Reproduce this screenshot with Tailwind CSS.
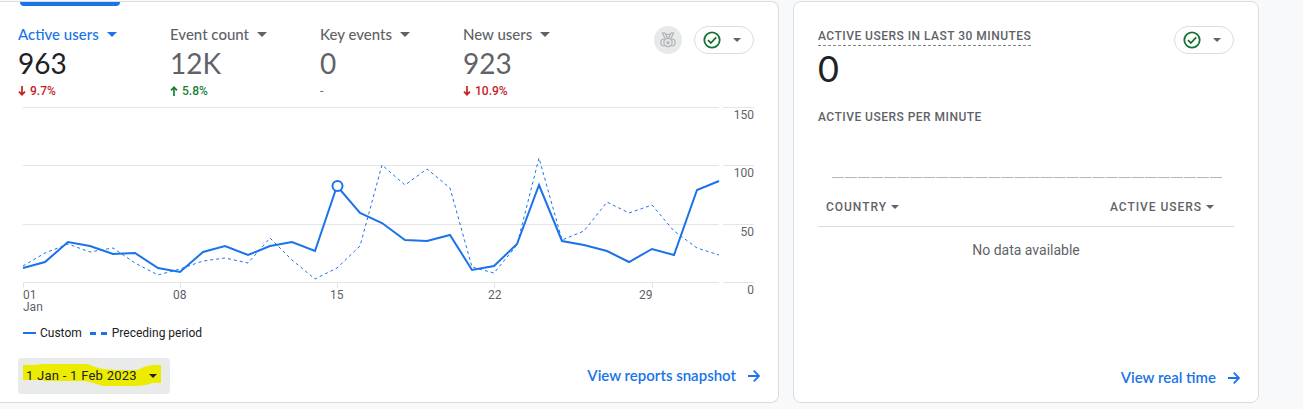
<!DOCTYPE html>
<html lang="en">
<head>
    <meta charset="UTF-8">
    <meta name="viewport" content="width=device-width, initial-scale=1.0">
    <title>Analytics Home</title>
    <script src="https://cdn.jsdelivr.net/npm/@tailwindcss/browser@4"></script>
</head>
<body class="bg-[#f8f9fb] font-[Roboto,sans-serif] text-xs text-[#5f6368]">

<main class="grid min-h-screen grid-cols-[779fr_466fr] gap-3.5 pt-px pr-11 pb-1.5">

    <!-- Overview card -->
    <section class="flex flex-col rounded-r-lg border border-l-0 border-[#dadce0] bg-white px-[18px] pb-2">
        <div class="ml-0.5 h-1 w-[100px] rounded-b bg-[#1a73e8]"></div>

        <div class="flex items-start justify-between pt-5 pr-1.5">
            <div class="grid grid-cols-[152px_150px_143px_auto] font-[Lato,sans-serif]">
                <div>
                    <button type="button" class="flex items-center gap-2 text-[15px] leading-4 font-medium text-[#1a73e8]">
                        Active users
                        <svg class="h-[5px] w-2.5" viewBox="0 0 10 5" fill="currentColor"><path d="M0 0h10L5 5z"/></svg>
                    </button>
                    <p class="mt-[5px] text-[28px] leading-8 text-[#202124]">963</p>
                    <p class="mt-1 flex items-center gap-1 font-[Roboto,sans-serif] leading-4 font-medium text-[#c5221f]">
                        <svg class="h-2.5 w-2" viewBox="0 0 8 10" fill="none" stroke="currentColor" stroke-width="1.7"><path d="M4 0v9M1 5.7l3 3 3-3"/></svg>
                        9.7%
                    </p>
                </div>
                <div>
                    <button type="button" class="flex items-center gap-2 text-[15px] leading-4 font-medium">
                        Event count
                        <svg class="h-[5px] w-2.5" viewBox="0 0 10 5" fill="currentColor"><path d="M0 0h10L5 5z"/></svg>
                    </button>
                    <p class="mt-[5px] text-[28px] leading-8">12K</p>
                    <p class="mt-1 flex items-center gap-1 font-[Roboto,sans-serif] leading-4 font-medium text-[#188038]">
                        <svg class="h-2.5 w-2" viewBox="0 0 8 10" fill="none" stroke="currentColor" stroke-width="1.7"><path d="M4 10V1M1 4.3l3-3 3 3"/></svg>
                        5.8%
                    </p>
                </div>
                <div>
                    <button type="button" class="flex items-center gap-2 text-[15px] leading-4 font-medium">
                        Key events
                        <svg class="h-[5px] w-2.5" viewBox="0 0 10 5" fill="currentColor"><path d="M0 0h10L5 5z"/></svg>
                    </button>
                    <p class="mt-[5px] text-[28px] leading-8">0</p>
                    <p class="mt-1 font-[Roboto,sans-serif] leading-4">-</p>
                </div>
                <div>
                    <button type="button" class="flex items-center gap-2 text-[15px] leading-4 font-medium">
                        New users
                        <svg class="h-[5px] w-2.5" viewBox="0 0 10 5" fill="currentColor"><path d="M0 0h10L5 5z"/></svg>
                    </button>
                    <p class="mt-[5px] text-[28px] leading-8">923</p>
                    <p class="mt-1 flex items-center gap-1 font-[Roboto,sans-serif] leading-4 font-medium text-[#c5221f]">
                        <svg class="h-2.5 w-2" viewBox="0 0 8 10" fill="none" stroke="currentColor" stroke-width="1.7"><path d="M4 0v9M1 5.7l3 3 3-3"/></svg>
                        10.9%
                    </p>
                </div>
            </div>

            <div class="flex items-center gap-3">
                <button type="button" aria-label="Benchmarking" class="flex size-7 items-center justify-center rounded-full bg-[#e8eaea] text-[#b0b3b6]">
                    <svg class="size-4" viewBox="0 0 16 16" fill="none" stroke="currentColor" stroke-width="1.2">
                        <path d="M2.200.8h2.600L7.500 6M2.200.8l3 5.700M13.800.8h-2.600L8.500 6M13.800.8l-3 5.700M5.500 2.300h5"/>
                        <circle cx="8" cy="10.500" r="4.200"/>
                        <path d="M4.500 7C2 6.800.8 8.500.8 10.500S2 14.200 4.500 14M11.500 7c2.500-.2 3.700 1.500 3.700 3.500S14 14.200 11.500 14"/>
                        <path d="M8 8.300l.7 1.500 1.600.2-1.200 1.100.3 1.600L8 11.900l-1.400.8.3-1.600L5.700 10l1.600-.2z" fill="currentColor" stroke="none"/>
                    </svg>
                </button>
                <button type="button" aria-label="Data quality" class="flex h-7 w-[60px] items-center gap-3 rounded-full border border-[#dadce0] bg-white pl-2">
                    <svg class="size-[18px]" viewBox="0 0 18 18" fill="none" stroke="#137333" stroke-width="1.8"><circle cx="9" cy="9" r="7.700"/><path d="M5 9.200l2.800 2.800L13.200 6.300"/></svg>
                    <svg class="h-1 w-2" viewBox="0 0 8 4" fill="currentColor"><path d="M0 0h8L4 4z"/></svg>
                </button>
            </div>
        </div>

        <!-- Trend chart -->
        <div class="mt-2 mr-1.5 ml-[5px] flex gap-1">
            <div class="flex-1">
                <svg class="block h-[182px] w-full overflow-visible" viewBox="0 0 696 182" preserveAspectRatio="none" fill="none">
                    <path d="M0 .5H696M0 58.500H696M0 117.500H696M0 175.500H696M.5 176v5M157.500 176v5M314.500 176v5M471.500 176v5M629.500 176v5" stroke="#e4e5e7"/>
                    <polyline points="0,159 22,146 45,137 67,145 90,141 112,156 135,168 157,162 180,154 202,151 225,156 247,131 269,153 292,172 314,161 337,139 359,58 382,78 404,62 427,81 449,160 471,166 494,138 516,51 539,133 561,124 584,95 606,106 629,98 651,124 674,141 696,148" stroke="#1a73e8" stroke-dasharray="3 3"/>
                    <polyline points="0,161 22,155 45,135 67,139 90,147 112,146 135,161 157,165 180,145 202,139 225,148 247,139 269,135 292,144 314,79 337,106 359,116 382,133 404,134 427,128 449,163 471,159 494,137 516,78 539,134 561,138 584,144 606,155 629,142 651,148 674,83 696,74" stroke="#1a73e8" stroke-width="2"/>
                    <circle cx="314.500" cy="79" r="5" fill="#fff" stroke="#1a73e8" stroke-width="2"/>
                </svg>
                <div class="grid grid-cols-[150fr_157fr_158fr_151fr_80fr] leading-3">
                    <span>01<br>Jan</span>
                    <span>08</span>
                    <span>15</span>
                    <span>22</span>
                    <span>29</span>
                </div>
            </div>
            <div class="flex w-[31px] flex-col text-right leading-3.5">
                <span class="h-[58px] border-t border-[#e4e5e7]">150</span>
                <span class="h-[59px] border-t border-[#e4e5e7]">100</span>
                <span class="h-[58px] border-t border-[#e4e5e7]">50</span>
                <span class="border-t border-[#e4e5e7]">0</span>
            </div>
        </div>

        <div class="mt-3 ml-[5px] flex items-center leading-4 text-[#202124]">
            <span class="mr-1 h-0.5 w-[13px] bg-[#1a73e8]"></span>
            Custom
            <span class="mr-[5px] ml-2 flex gap-[5px]"><i class="h-[3px] w-1.5 bg-[#1a73e8]"></i><i class="h-[3px] w-1.5 bg-[#1a73e8]"></i></span>
            Preceding period
        </div>

        <div class="mt-auto flex items-center justify-between">
            <button type="button" class="relative h-9 w-[152px] rounded bg-[#e9ebea] pl-2 text-left text-[13px] tracking-[0.02em] text-[#202124]">
                <svg class="absolute top-1.5 left-[5px] h-[23px] w-[138px]" viewBox="0 0 138 23" fill="#ecec00"><path d="M0 1 12 1 20 0 36 0 65 0 72 3 80 5 95 6 114 6 121 3 128 1H138V19H129L123 21 113 22H80L70 19 62 17H20V16H0z"/></svg>
                <span class="relative flex items-center gap-3">1 Jan - 1 Feb 2023
                    <svg class="h-1 w-2" viewBox="0 0 8 4" fill="currentColor"><path d="M0 0h8L4 4z"/></svg>
                </span>
            </button>
            <a href="#" class="flex items-center gap-3 font-[Lato,sans-serif] text-[15px] font-semibold text-[#1a73e8]">
                View reports snapshot
                <svg class="size-3" viewBox="0 0 12 12" fill="none" stroke="currentColor" stroke-width="1.8"><path d="M0 6h11M5.800.7 11 6l-5.200 5.300"/></svg>
            </a>
        </div>
    </section>

    <!-- Real time card -->
    <section class="flex flex-col rounded-lg border border-[#dadce0] bg-white px-6 pb-3.5">
        <div class="flex items-start justify-between pt-6">
            <div>
                <h2 class="border-b border-dashed border-[#80868b] pt-0.5 pb-px leading-4 font-medium tracking-[0.04em]">ACTIVE USERS IN LAST 30 MINUTES</h2>
                <p class="mt-0.5 font-[Lato,sans-serif] text-4xl leading-10 text-[#202124]">0</p>
            </div>
            <button type="button" aria-label="Data quality" class="flex h-7 w-[60px] items-center gap-3 rounded-full border border-[#dadce0] bg-white pl-2">
                <svg class="size-[18px]" viewBox="0 0 18 18" fill="none" stroke="#137333" stroke-width="1.8"><circle cx="9" cy="9" r="7.700"/><path d="M5 9.200l2.800 2.800L13.200 6.300"/></svg>
                <svg class="h-1 w-2" viewBox="0 0 8 4" fill="currentColor"><path d="M0 0h8L4 4z"/></svg>
            </button>
        </div>

        <h3 class="mt-[21px] leading-4 font-medium tracking-[0.04em]">ACTIVE USERS PER MINUTE</h3>
        <svg class="mt-[52px] mr-3 ml-3.5 block h-px" viewBox="0 0 389 1" preserveAspectRatio="none"><path d="M0 .5H389" stroke="#b3b6b9" stroke-dasharray="12 1"/></svg>

        <table class="mt-[17px] w-full">
            <thead>
                <tr class="border-b border-[#dadce0]">
                    <th class="pt-1 pb-[11px] pl-2 text-left leading-4 font-medium tracking-[0.08em]">
                        <button type="button" class="flex items-center gap-1">COUNTRY <svg class="h-1 w-2" viewBox="0 0 8 4" fill="currentColor"><path d="M0 0h8L4 4z"/></svg></button>
                    </th>
                    <th class="pt-1 pr-5 pb-[11px] leading-4 font-medium tracking-[0.08em]">
                        <button type="button" class="ml-auto flex items-center gap-1">ACTIVE USERS <svg class="h-1 w-2" viewBox="0 0 8 4" fill="currentColor"><path d="M0 0h8L4 4z"/></svg></button>
                    </th>
                </tr>
            </thead>
            <tbody>
                <tr><td colspan="2" class="pt-[13px] text-center text-sm">No data available</td></tr>
            </tbody>
        </table>

        <a href="#" class="mt-auto -mr-1.5 flex items-center gap-3 self-end font-[Lato,sans-serif] text-[15px] font-semibold text-[#1a73e8]">
            View real time
            <svg class="size-3" viewBox="0 0 12 12" fill="none" stroke="currentColor" stroke-width="1.8"><path d="M0 6h11M5.800.7 11 6l-5.200 5.300"/></svg>
        </a>
    </section>
</main>

</body>
</html>
